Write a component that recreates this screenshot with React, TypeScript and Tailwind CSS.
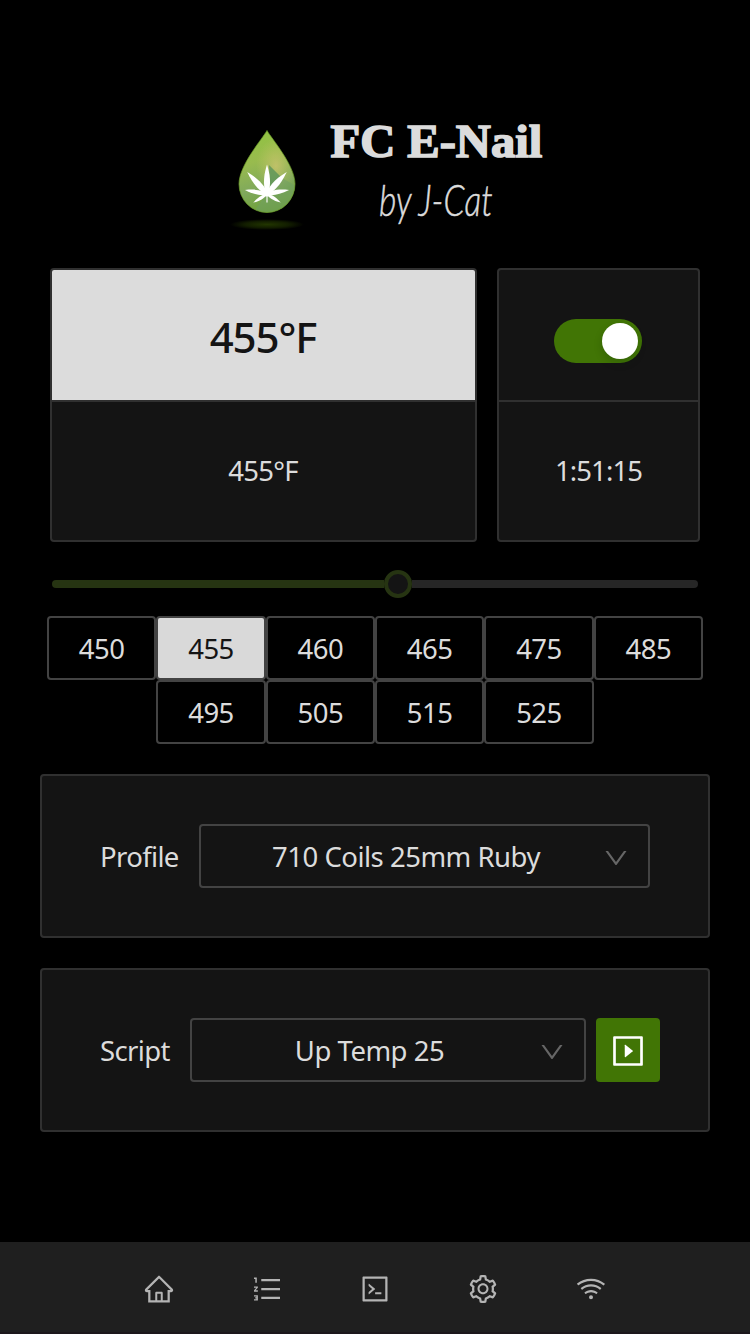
import type { ReactNode } from "react";
import {
  AiOutlineCode,
  AiOutlineDown,
  AiOutlineHome,
  AiOutlineOrderedList,
  AiOutlinePlaySquare,
  AiOutlineSetting,
  AiOutlineWifi,
} from "react-icons/ai";

const PRESETS = [450, 455, 460, 465, 475, 485, 495, 505, 515, 525];

const LEAFLETS = [
  { angle: 0, size: 1 },
  { angle: -42, size: 1 },
  { angle: 42, size: 1 },
  { angle: -80, size: 0.76 },
  { angle: 80, size: 0.76 },
  { angle: -122, size: 0.55 },
  { angle: 122, size: 0.55 },
];

function Logo() {
  return (
    <svg width="76" height="106" viewBox="0 0 76 106" aria-hidden="true">
      <defs>
        <linearGradient id="drop" x1="0" y1="0" x2="0.25" y2="1">
          <stop offset="0" stopColor="#8fc63d" />
          <stop offset="0.45" stopColor="#98bb4e" />
          <stop offset="0.75" stopColor="#7fa85c" />
          <stop offset="1" stopColor="#70a238" />
        </linearGradient>
        <radialGradient id="glow">
          <stop offset="0" stopColor="#d0c570" stopOpacity="0.75" />
          <stop offset="1" stopColor="#c2c765" stopOpacity="0" />
        </radialGradient>
        <radialGradient id="shadow">
          <stop offset="0" stopColor="#223600" />
          <stop offset="0.6" stopColor="#121d00" />
          <stop offset="1" stopColor="#000000" />
        </radialGradient>
        <clipPath id="dropClip">
          <path d="M37 4.500C33 12 9 39 9 58a28 28.500 0 0 0 56 0C65 39 41 12 37 4.500Z" />
        </clipPath>
      </defs>
      <ellipse cx="37" cy="98.500" rx="37" ry="5.500" fill="url(#shadow)" />
      <g clipPath="url(#dropClip)">
        <rect width="76" height="90" fill="url(#drop)" />
        <ellipse cx="46" cy="40" rx="20" ry="28" fill="url(#glow)" />
        <path d="M39 39 52 52 40 64Z" fill="#5f965b" opacity="0.85" />
        <path d="M52 52 66 60V88H22L38 66Z" fill="#6f9f62" opacity="0.55" />
      </g>
      <path
        d="M37 4.500C33 12 9 39 9 58a28 28.500 0 0 0 56 0C65 39 41 12 37 4.500Z"
        fill="none"
        stroke="#6c9e2a"
        strokeOpacity="0.7"
        strokeWidth="1"
      />
      <g fill="#ffffff">
        {LEAFLETS.map(({ angle, size }) => (
          <path
            key={angle}
            transform={`translate(37 68) rotate(${angle}) scale(${size})`}
            d="M0 2C-3.500 -5 -4.600 -15 0 -29.500C4.600 -15 3.500 -5 0 2Z"
          />
        ))}
        <circle cx="37" cy="67" r="3.500" />
        <path d="M36.200 66h1.600v10.500h-1.600z" opacity="0.7" />
      </g>
    </svg>
  );
}

function Card({ children }: { children: ReactNode }) {
  return (
    <section className="flex h-[164px] items-center rounded border-2 border-[#303030] bg-[#141414] pr-12 pl-[58px]">
      {children}
    </section>
  );
}

function Select({ value }: { value: string }) {
  return (
    <button className="flex h-16 min-w-0 flex-1 items-center rounded border-2 border-[#434343] pr-[18px] pl-[9px]">
      <span className="flex-1 pt-px text-center whitespace-nowrap">{value}</span>
      <AiOutlineDown className="mt-1 size-7 shrink-0 text-[#666666]" />
    </button>
  );
}

export default function App() {
  return (
    <div className="flex h-[1334px] w-[750px] flex-col bg-black font-['Noto_Sans',sans-serif] text-[27.500px] leading-[44px] tracking-[-0.500px] text-[#dcdcdc]">
      <header className="flex h-[268px] pt-[126px] pl-[230px]">
        <Logo />
        <div className="flex w-[260px] flex-col items-center">
          <h1 className="-mt-0.5 origin-center scale-x-[1.055] font-['Liberation_Serif',serif] text-[46px] leading-[36px] font-bold tracking-normal whitespace-nowrap [-webkit-text-stroke:1.600px_#dcdcdc]">
            FC E-Nail
          </h1>
          <p className="mt-3.5 scale-x-[0.780] font-['Lato',sans-serif] text-[43px] leading-[52px] font-light tracking-normal whitespace-nowrap italic [-webkit-text-stroke:0.500px_#dcdcdc]">
            by J-Cat
          </p>
        </div>
      </header>

      <main className="flex flex-1 flex-col px-10">
        <div className="flex h-[274px] gap-5 px-2.5">
          <section className="flex w-[427px] flex-col overflow-hidden rounded border-2 border-[#303030] bg-[#141414] text-center">
            <div className="flex h-[132px] items-center justify-center border-b-2 border-[#303030] bg-[#dcdcdc] pt-[3px] pr-px text-[42px] font-medium tracking-[-1.100px] text-[#141414]">
              455°F
            </div>
            <div className="flex flex-1 items-center justify-center pr-px tracking-[-0.700px]">
              455°F
            </div>
          </section>
          <section className="flex w-[203px] flex-col rounded border-2 border-[#303030] bg-[#141414]">
            <div className="flex h-[132px] items-center justify-center border-b-2 border-[#303030] pt-3 pr-[2px]">
              <button
                role="switch"
                aria-checked="true"
                className="flex h-11 w-[88px] items-center justify-end rounded-full bg-[#417505] p-1"
              >
                <span className="size-9 rounded-full bg-white shadow-[0_4px_8px_rgba(0,35,11,0.2)]" />
              </button>
            </div>
            <div className="flex flex-1 items-center justify-center tracking-[-0.900px]">
              1:51:15
            </div>
          </section>
        </div>

        <div className="mt-7 flex h-7 items-center px-3">
          <div className="h-2 w-[332px] rounded-l-full bg-[#263412]" />
          <div className="size-7 rounded-full border-4 border-[#263412] bg-[#141414]" />
          <div className="h-2 flex-1 rounded-r-full bg-[#262626]" />
        </div>

        <div className="mt-[18px] flex flex-wrap justify-center px-[7px]">
          {PRESETS.map((temp) => (
            <button
              key={temp}
              className={`h-16 w-1/6 rounded border-2 border-[#434343] pt-px ${
                temp === 455 ? "bg-[#d9d9d9] text-[#141414]" : "bg-black"
              }`}
            >
              {temp}
            </button>
          ))}
        </div>

        <div className="mt-[30px] flex flex-col gap-[30px]">
          <Card>
            <span className="w-[99px] pt-px tracking-[-0.650px]">Profile</span>
            <div className="flex flex-1 pr-2.5">
              <Select value="710 Coils 25mm Ruby" />
            </div>
          </Card>
          <Card>
            <span className="w-[90px] pt-px tracking-[-0.650px]">Script</span>
            <Select value="Up Temp 25" />
            <button className="ml-2.5 flex size-16 items-center justify-center rounded bg-[#417505] text-white">
              <AiOutlinePlaySquare className="mt-0.5 size-[38px]" />
            </button>
          </Card>
        </div>
      </main>

      <nav className="flex h-[92px] items-center justify-center gap-[76px] border-b-2 border-[#1c171b] bg-[#1f1f1f] pt-1 text-[#b4b4b4]">
        <AiOutlineHome className="size-8" />
        <AiOutlineOrderedList className="size-8" />
        <AiOutlineCode className="size-8" />
        <AiOutlineSetting className="size-8" />
        <AiOutlineWifi className="size-8" />
      </nav>
    </div>
  );
}
